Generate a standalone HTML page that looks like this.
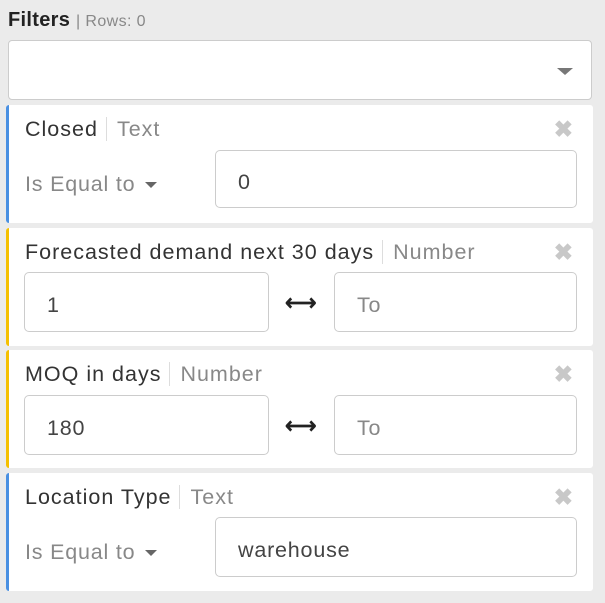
<!DOCTYPE html>
<html><head><style>
body{margin:0;width:605px;height:603px;background:#ebebeb;font-family:"Liberation Sans",sans-serif;position:relative;overflow:hidden}
.a{position:absolute}
.hdr{left:8px;top:9px;font-size:20px;font-weight:bold;color:#222;letter-spacing:0.3px}
.hdr span{font-weight:normal;font-size:16px;color:#888;letter-spacing:0.4px}
.sel{left:8px;top:40px;width:582px;height:58px;background:#fff;border:1px solid #ccc;border-radius:4px}
.card{left:6px;width:584px;height:118px;background:#fff;border-radius:3px}
.card.b{border-left:3px solid #4a90e2}
.card.y{border-left:3px solid #f5c000}
.t{font-size:21.5px;color:#333;white-space:nowrap;letter-spacing:1px}
.ty{color:#888;border-left:1px solid #ddd;padding-left:10px;margin-left:8px}
.x{font-size:23px;color:#c8c8c8;font-weight:bold}
.in{background:#fff;border:1px solid #ccc;border-radius:5px;box-sizing:border-box;font-size:21.5px;letter-spacing:0.8px;color:#444;padding-left:22px;padding-top:6px;display:flex;align-items:center}
.op{font-size:21.5px;color:#888;letter-spacing:0.8px}
.caret{display:inline-block;width:0;height:0;border-left:6px solid transparent;border-right:6px solid transparent;border-top:6px solid #666;vertical-align:middle;margin-left:10px}
.arr{font-size:22px;color:#222;font-weight:bold}
</style></head><body>
<div class="a hdr">Filters <span>| Rows: 0</span></div>
<div class="a sel"><div class="a" style="right:18px;top:27px;width:0;height:0;border-left:8px solid transparent;border-right:8px solid transparent;border-top:7px solid #777"></div></div>

<div class="a card b" style="top:105px">
 <div class="a t" style="left:16px;top:12px">Closed<span class="ty">Text</span></div>
 <div class="a x" style="right:20px;top:11px">✖</div>
 <div class="a op" style="left:16px;top:67px">Is Equal to<span class="caret"></span></div>
 <div class="a in" style="left:206px;top:45px;width:362px;height:58px">0</div>
</div>

<div class="a card y" style="top:228px">
 <div class="a t" style="left:16px;top:12px">Forecasted demand next 30 days<span class="ty">Number</span></div>
 <div class="a x" style="right:20px;top:11px">✖</div>
 <div class="a in" style="left:15px;top:44px;width:245px;height:60px">1</div>
 <div class="a arr" style="left:276px;top:62px">⟷</div>
 <div class="a in" style="left:325px;top:44px;width:243px;height:60px;color:#888">To</div>
</div>

<div class="a card y" style="top:350px">
 <div class="a t" style="left:16px;top:12px">MOQ in days<span class="ty">Number</span></div>
 <div class="a x" style="right:20px;top:11px">✖</div>
 <div class="a in" style="left:15px;top:45px;width:245px;height:60px">180</div>
 <div class="a arr" style="left:276px;top:63px">⟷</div>
 <div class="a in" style="left:325px;top:45px;width:243px;height:60px;color:#888">To</div>
</div>

<div class="a card b" style="top:473px">
 <div class="a t" style="left:16px;top:12px">Location Type<span class="ty">Text</span></div>
 <div class="a x" style="right:20px;top:11px">✖</div>
 <div class="a op" style="left:16px;top:67px">Is Equal to<span class="caret"></span></div>
 <div class="a in" style="left:206px;top:44px;width:362px;height:60px">warehouse</div>
</div>
</body></html>
